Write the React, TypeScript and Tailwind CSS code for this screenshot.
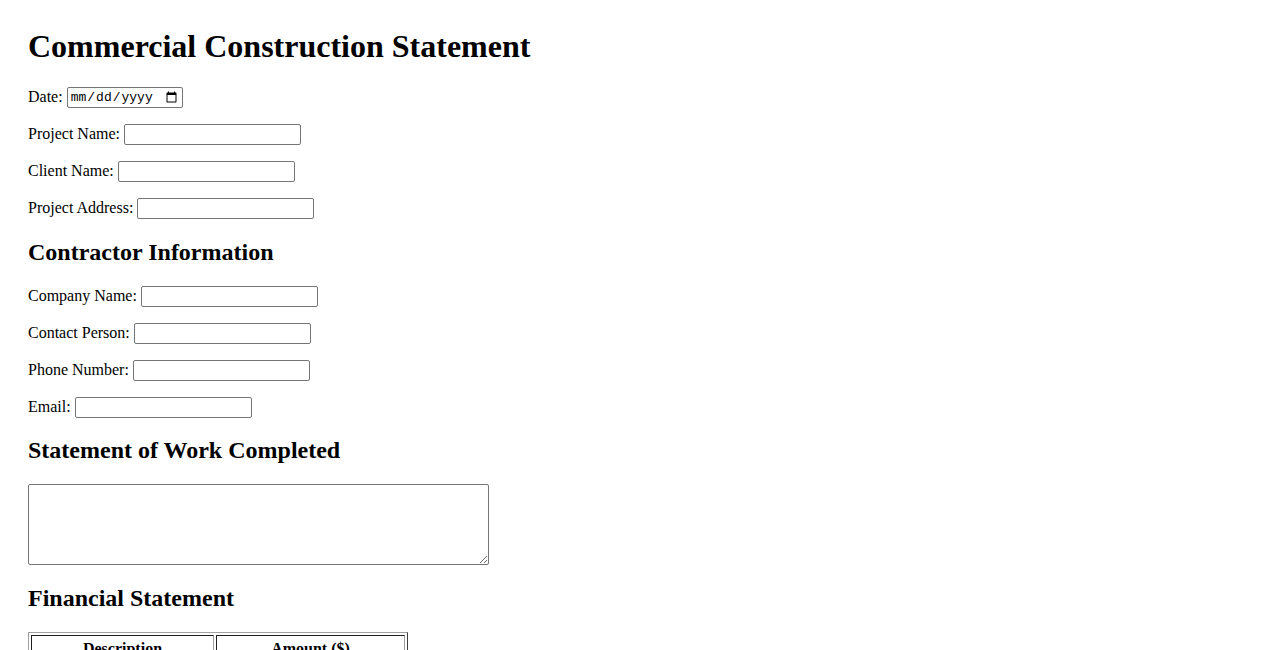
import React from 'react'

const inputCls =
  'box-border w-[177px] h-[21px] border border-[#767676] rounded-[2px] px-[2px] py-[1px] bg-white text-[13.33px] font-[Arial,"Liberation_Sans",sans-serif] outline-none'

const Field = ({ label, type = 'text', last = false }: { label: string; type?: string; last?: boolean }) => {
  return (
    <div className={`flex items-center gap-[4px] h-[21px] ${last ? '' : 'mb-[16px]'}`}>
      <label className='whitespace-nowrap pb-[2px]'>{label}</label>
      <input type={type} className={inputCls} />
    </div>
  )
}

const rows = [
  'Materials',
  'Labor',
  'Equipment',
  'Subcontractors',
  'Total',
]

const cellCls = 'border border-t-[#202020] border-l-[#202020] border-r-[#a0a0a0] border-b-[#a0a0a0]'

const App = () => {
  return (
    <div className='bg-white text-black font-["Liberation_Serif","Times_New_Roman",serif] text-[16px] leading-[normal] pl-[28px] pt-[28px] pb-[28px] min-h-screen'>
      <h1 className='text-[32px] font-bold leading-[37px] mb-[22px]'>Commercial Construction Statement</h1>

      <div className='flex items-center gap-[4px] h-[21px] mb-[16px]'>
        <label className='pb-[2px]'>Date:</label>
        <input
          type='date'
          className='box-border w-[116px] h-[21px] border border-[#767676] rounded-[2px] px-[2px] py-0 bg-white text-[13px] font-["Liberation_Mono",monospace] outline-none'
        />
      </div>
      <Field label='Project Name:' />
      <Field label='Client Name:' />
      <Field label='Project Address:' last />

      <h2 className='text-[24px] font-bold leading-[28px] mt-[19px] mb-[20px]'>Contractor Information</h2>
      <Field label='Company Name:' />
      <Field label='Contact Person:' />
      <Field label='Phone Number:' type='tel' />
      <Field label='Email:' type='email' last />

      <h2 className='text-[24px] font-bold leading-[28px] mt-[18px] mb-[20px]'>Statement of Work Completed</h2>
      <textarea className='block box-border w-[461px] h-[81px] border border-[#767676] rounded-[2px] p-[2px] bg-white text-[13.33px] font-["Liberation_Mono",monospace] resize outline-none' />

      <h2 className='text-[24px] font-bold leading-[28px] mt-[19px] mb-[20px]'>Financial Statement</h2>
      <table className='border-separate border-spacing-[2px] border border-t-[#a0a0a0] border-l-[#a0a0a0] border-r-[#404040] border-b-[#404040]'>
        <thead>
          <tr>
            <th className={`w-[183px] px-[1px] pt-[4px] pb-[1px] font-bold text-center ${cellCls}`}>Description</th>
            <th className={`w-[189px] px-[1px] pt-[4px] pb-[1px] font-bold text-center ${cellCls}`}>Amount ($)</th>
          </tr>
        </thead>
        <tbody>
          {rows.map((r) => (
            <tr key={r}>
              <td className={`p-[1px] ${cellCls}`}>{r}</td>
              <td className={`p-[1px] ${cellCls}`}>
                <input type='number' className={inputCls} />
              </td>
            </tr>
          ))}
        </tbody>
      </table>
    </div>
  )
}

export default App
